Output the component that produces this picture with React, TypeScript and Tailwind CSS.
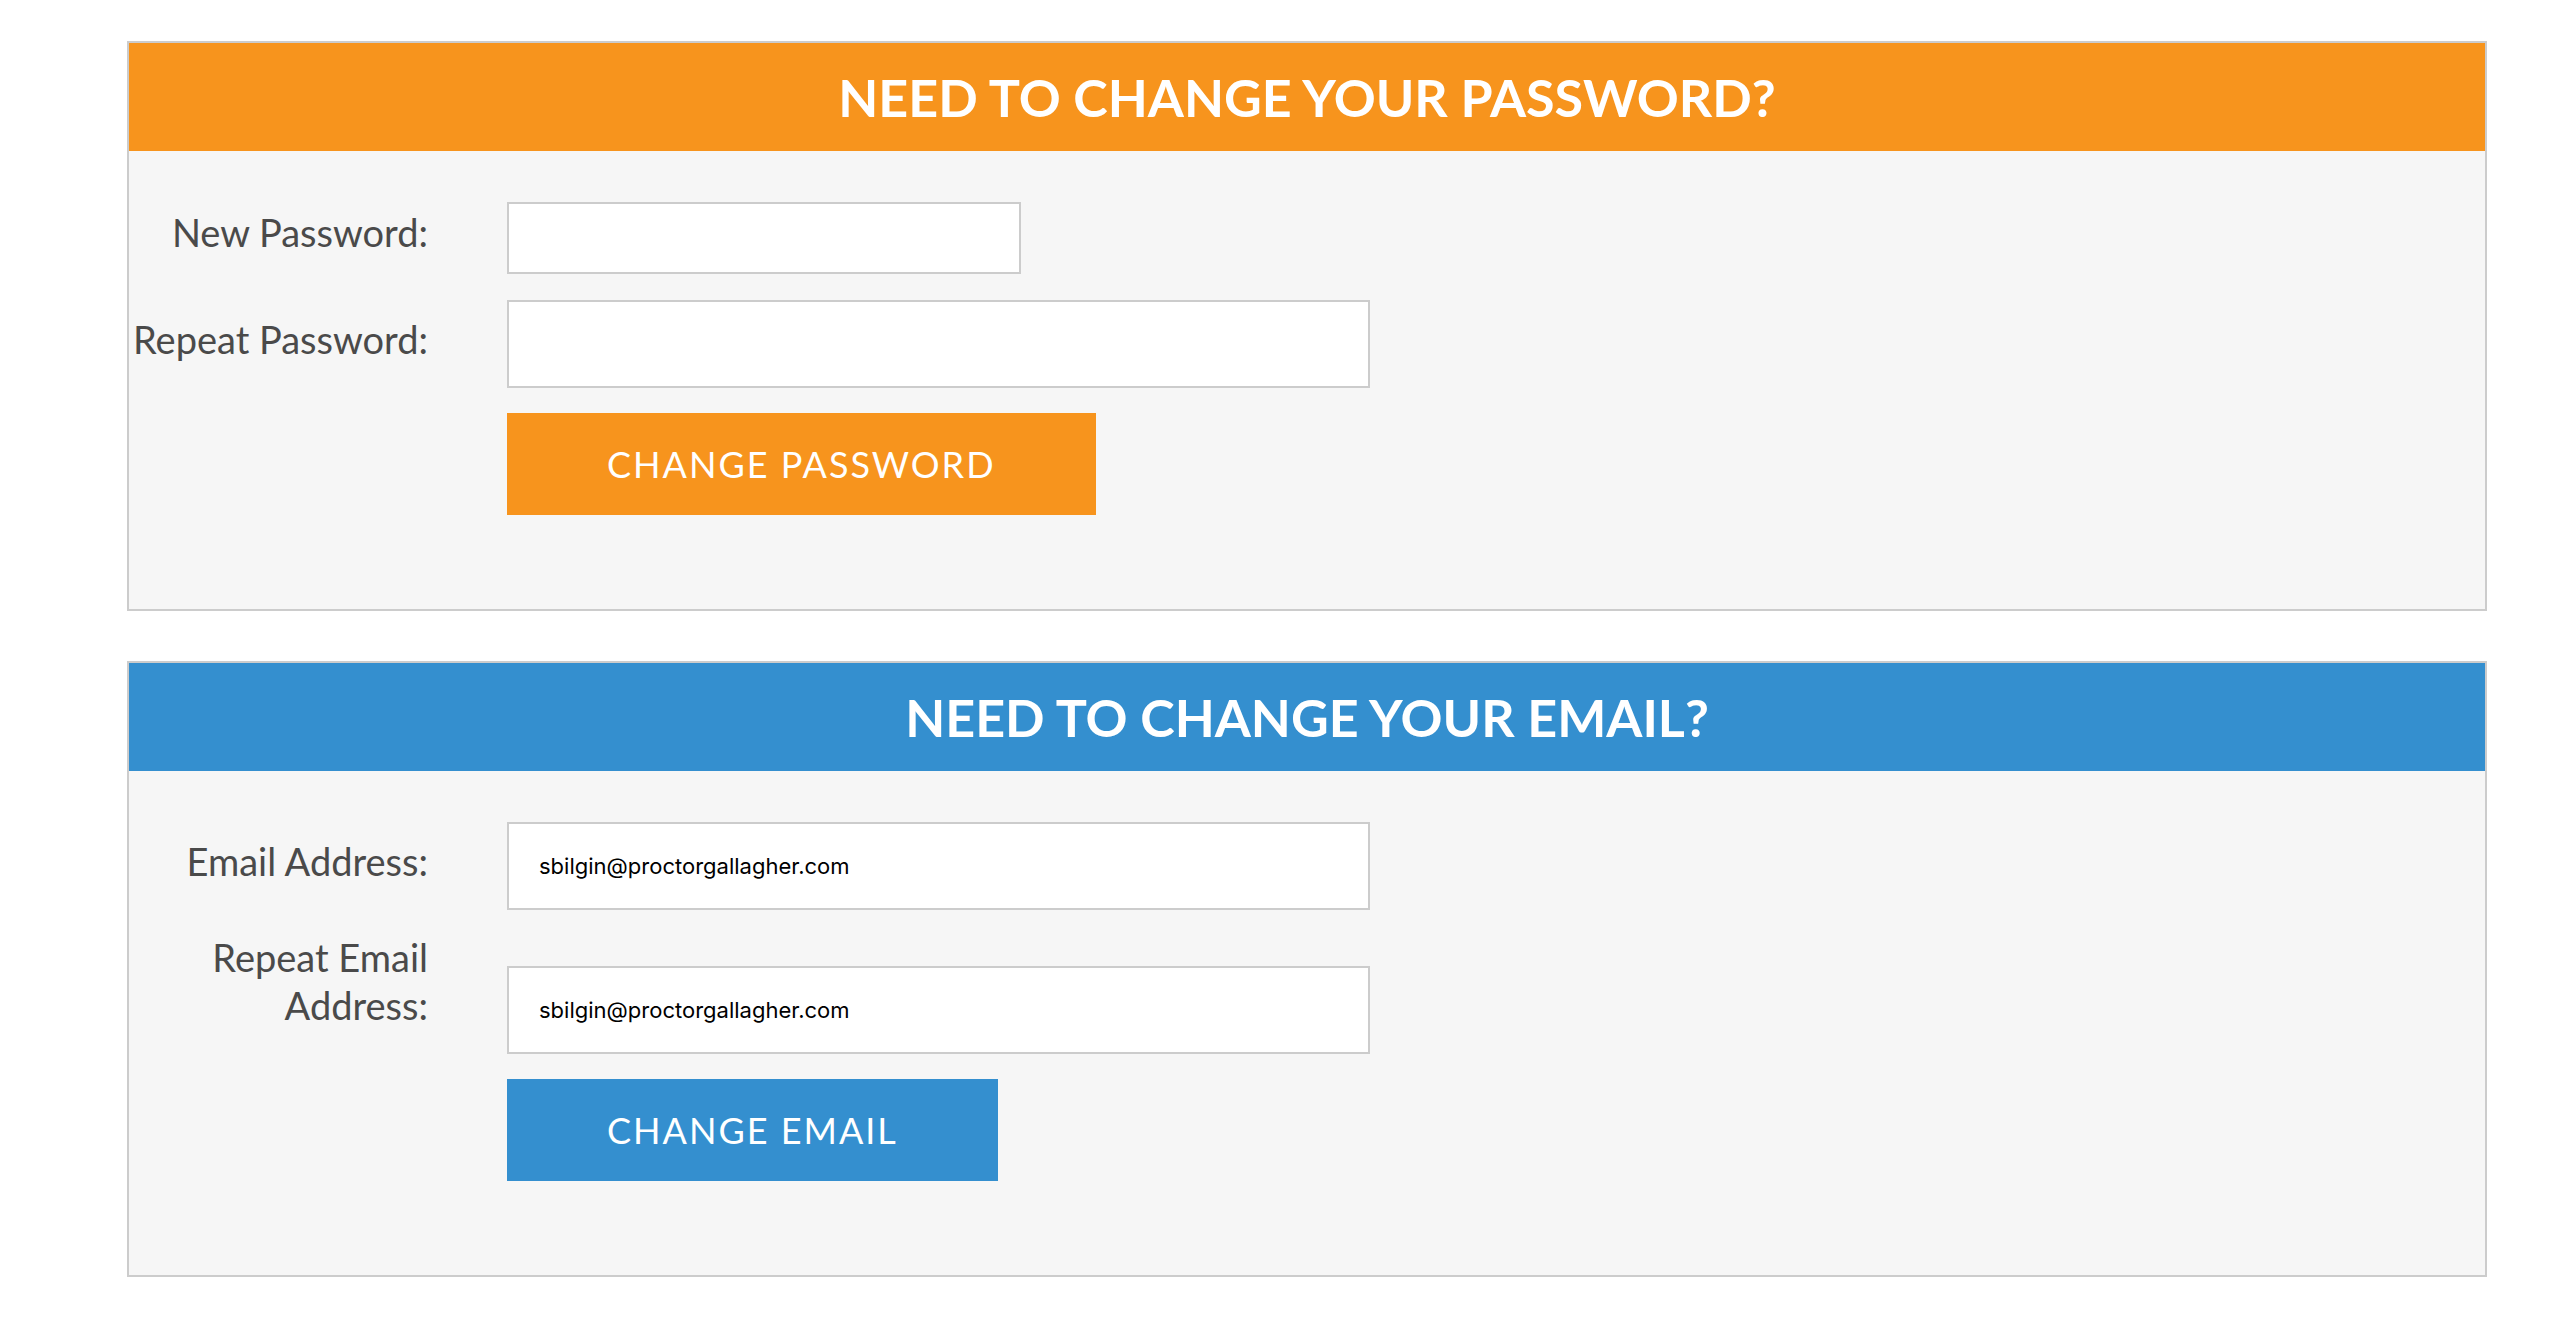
import React from 'react';

const labelFont = { fontFamily: 'Lato, "Open Sans", sans-serif' };

interface FieldProps {
  label: React.ReactNode;
  value?: string;
  inputWidth: string;
  inputHeight: string;
  labelTop: string;
  inputTop: string;
  rowTop: string;
}

const Field: React.FC<FieldProps> = ({ label, value, inputWidth, inputHeight, labelTop, inputTop, rowTop }) => (
  <div className={`flex items-start ${rowTop}`}>
    <div
      className={`w-[299px] mr-[79px] text-right text-[38px] leading-[48px] text-[#4a4a4a] whitespace-nowrap ${labelTop}`}
      style={labelFont}
    >
      {label}
    </div>
    <input
      type="text"
      defaultValue={value}
      className={`${inputWidth} ${inputHeight} ${inputTop} bg-white border-2 border-[#cccccc] pl-[30px] text-[22px] text-black outline-none`}
      style={{ fontFamily: 'Inter, "Liberation Sans", sans-serif' }}
    />
  </div>
);

const PanelHeader: React.FC<{ title: string; color: string }> = ({ title, color }) => (
  <div className={`h-[108px] flex items-center justify-center ${color}`}>
    <h2 className="text-white text-[52px] font-bold" style={labelFont}>
      {title}
    </h2>
  </div>
);

const ActionButton: React.FC<{ text: string; color: string }> = ({ text, color }) => (
  <div className="flex mt-[25px]">
    <div className="w-[299px] mr-[79px]" />
    <button
      className={`h-[102px] px-[100px] ${color} text-white text-[36px] tracking-[2px]`}
      style={labelFont}
    >
      {text}
    </button>
  </div>
);

export default function App() {
  return (
    <div className="min-h-screen bg-white pt-[41px] pl-[127px]">
      <div className="w-[2360px] border-2 border-[#cccccc] bg-[#f6f6f6]">
        <PanelHeader title="NEED TO CHANGE YOUR PASSWORD?" color="bg-[#f7941d]" />
        <div className="pt-[51px] pb-[94px]">
          <Field
            label="New Password:"
            inputWidth="w-[514px]"
            inputHeight="h-[72px]"
            labelTop="mt-[6px]"
            inputTop="mt-0"
            rowTop="mt-0"
          />
          <Field
            label="Repeat Password:"
            inputWidth="w-[863px]"
            inputHeight="h-[88px]"
            labelTop="mt-[15px]"
            inputTop="mt-0"
            rowTop="mt-[26px]"
          />
          <ActionButton text="CHANGE PASSWORD" color="bg-[#f7941d]" />
        </div>
      </div>

      <div className="w-[2360px] mt-[50px] border-2 border-[#cccccc] bg-[#f6f6f6]">
        <PanelHeader title="NEED TO CHANGE YOUR EMAIL?" color="bg-[#348fcf]" />
        <div className="pt-[51px] pb-[94px]">
          <Field
            label="Email Address:"
            value="sbilgin@proctorgallagher.com"
            inputWidth="w-[863px]"
            inputHeight="h-[88px]"
            labelTop="mt-[15px]"
            inputTop="mt-0"
            rowTop="mt-0"
          />
          <Field
            label={
              <>
                <span className="block">Repeat Email</span>
                <span className="block">Address:</span>
              </>
            }
            value="sbilgin@proctorgallagher.com"
            inputWidth="w-[863px]"
            inputHeight="h-[88px]"
            labelTop="mt-0"
            inputTop="mt-[33px]"
            rowTop="mt-[23px]"
          />
          <ActionButton text="CHANGE EMAIL" color="bg-[#348fcf]" />
        </div>
      </div>
    </div>
  );
}
